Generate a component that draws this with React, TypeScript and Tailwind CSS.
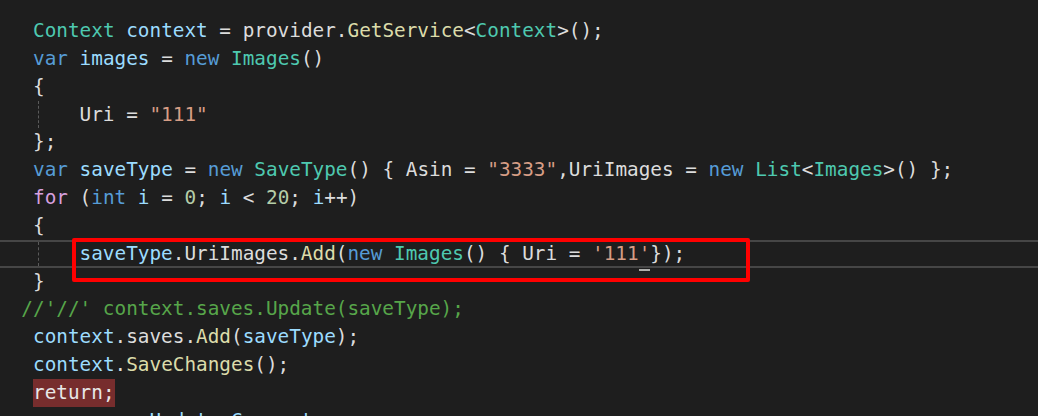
import React from 'react';

type Tok = [string, string];

const C = {
  type: 'text-[#4ec9b0]',
  vari: 'text-[#9cdcfe]',
  kw: 'text-[#569cd6]',
  ctrl: 'text-[#d8a0df]',
  fn: 'text-[#dcdcaa]',
  str: 'text-[#d69d85]',
  num: 'text-[#b5cea8]',
  txt: 'text-[#dcdcdc]',
  cmt: 'text-[#57a64a]',
};

const lines: Tok[][] = [
  [[' ', C.txt], ['Context', C.type], [' ', C.txt], ['context', C.vari], [' = provider.', C.txt], ['GetService', C.fn], ['<', C.txt], ['Context', C.type], ['>();', C.txt]],
  [[' ', C.txt], ['var', C.kw], [' ', C.txt], ['images', C.vari], [' = ', C.txt], ['new', C.kw], [' ', C.txt], ['Images', C.type], ['()', C.txt]],
  [[' {', C.txt]],
  [['     Uri = ', C.txt], ['"111"', C.str]],
  [[' };', C.txt]],
  [[' ', C.txt], ['var', C.kw], [' ', C.txt], ['saveType', C.vari], [' = ', C.txt], ['new', C.kw], [' ', C.txt], ['SaveType', C.type], ['() { Asin = ', C.txt], ['"3333"', C.str], [',UriImages = ', C.txt], ['new', C.kw], [' ', C.txt], ['List', C.type], ['<', C.txt], ['Images', C.type], ['>() };', C.txt]],
  [[' ', C.txt], ['for', C.ctrl], [' (', C.txt], ['int', C.kw], [' ', C.txt], ['i', C.vari], [' = ', C.txt], ['0', C.num], ['; ', C.txt], ['i', C.vari], [' < ', C.txt], ['20', C.num], ['; ', C.txt], ['i', C.vari], ['++)', C.txt]],
  [[' {', C.txt]],
  [],
  [[' }', C.txt]],
  [['//\'//\' context.saves.Update(saveType);', C.cmt]],
  [[' ', C.txt], ['context', C.vari], ['.saves.', C.txt], ['Add', C.fn], ['(', C.txt], ['saveType', C.vari], [');', C.txt]],
  [[' ', C.txt], ['context', C.vari], ['.', C.txt], ['SaveChanges', C.fn], ['();', C.txt]],
  [],
  [['           ', C.txt], ['Update', C.vari], [' ', C.txt], ['Comment', C.vari]],
];

function Guide() {
  return <span className="absolute left-[38px] top-0 bottom-0 border-l border-dashed border-[#5a5a5a]" />;
}

function Line({ toks, children, guide, current }: { toks?: Tok[]; children?: React.ReactNode; guide?: boolean; current?: boolean }) {
  return (
    <div
      className={
        'relative flex items-center h-[27.85px] pl-[21.35px] whitespace-pre box-border ' +
        (current ? 'border-y-2 border-[#464646]' : '')
      }
    >
      {guide && <Guide />}
      {toks?.map((t, i) => (
        <span key={i} className={t[1]}>
          {t[0]}
        </span>
      ))}
      {children}
    </div>
  );
}

export default function App() {
  return (
    <div
      className="relative w-[1038px] h-[416px] overflow-hidden bg-[#1e1e1e] pt-[17px] text-[19.35px] leading-[27.85px]"
      style={{ fontFamily: '"DejaVu Sans Mono", "Liberation Mono", monospace' }}
    >
      {lines.map((toks, idx) => {
        if (idx === 8) {
          return (
            <Line key={idx} guide current>
              <span className={C.txt}>{'     '}</span>
              <span className={C.vari}>saveType</span>
              <span className={C.txt}>.UriImages.</span>
              <span className={C.fn}>Add</span>
              <span className={C.txt}>(</span>
              <span className={C.kw}>new</span>
              <span className={C.txt}> </span>
              <span className={C.type}>Images</span>
              <span className={C.txt}>{'() { Uri = '}</span>
              <span className={C.str}>'111</span>
              <span className={'relative ' + C.str}>
                '
                <span className="absolute left-0 right-0 top-[calc(100%+1px)] h-[2px] bg-[#aeafad]" />
              </span>
              <span className={C.txt}>{'});'}</span>
            </Line>
          );
        }
        if (idx === 13) {
          return (
            <Line key={idx}>
              <span className={C.txt}> </span>
              <span className="self-stretch flex items-center bg-[#772d2d] text-[#e8e8e8]">return;</span>
            </Line>
          );
        }
        return <Line key={idx} toks={toks} guide={idx === 3} />;
      })}

      {/* red annotation box */}
      <div className="absolute left-[72px] top-[238px] w-[678px] h-[44px] border-4 border-[#ff0000] rounded-[2px]" />
    </div>
  );
}
